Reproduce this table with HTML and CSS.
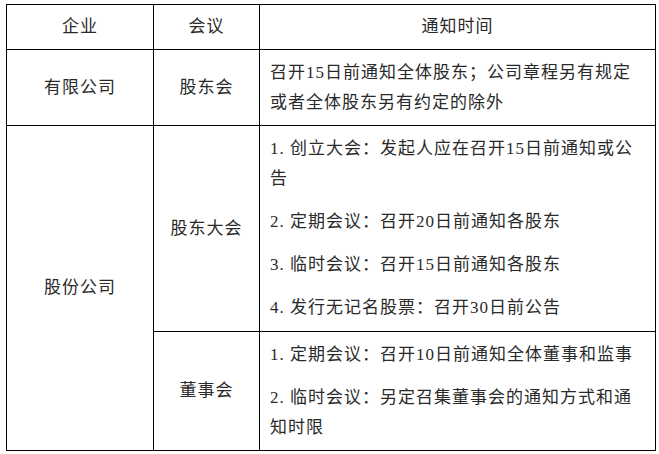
FILE: index.html
```html
<!DOCTYPE html>
<html lang="zh-CN">
<head>
<meta charset="utf-8">
<title>通知时间</title>
<link rel="stylesheet" href="styles.css">
</head>
<body>
<table class="notice-table">
  <colgroup>
    <col class="col-company">
    <col class="col-meeting">
    <col class="col-time">
  </colgroup>
  <tr class="row-head">
    <th>企业</th>
    <th>会议</th>
    <th>通知时间</th>
  </tr>
  <tr class="row-ltd">
    <td class="center">有限公司</td>
    <td class="center">股东会</td>
    <td class="detail"><p>召开15日前通知全体股东；公司章程另有规定<br>或者全体股东另有约定的除外</p></td>
  </tr>
  <tr class="row-agm">
    <td class="center" rowspan="2">股份公司</td>
    <td class="center">股东大会</td>
    <td class="detail">
      <p>1. 创立大会：发起人应在召开15日前通知或公<br>告</p>
      <p>2. 定期会议：召开20日前通知各股东</p>
      <p>3. 临时会议：召开15日前通知各股东</p>
      <p>4. 发行无记名股票：召开30日前公告</p>
    </td>
  </tr>
  <tr class="row-board">
    <td class="center">董事会</td>
    <td class="detail">
      <p>1. 定期会议：召开10日前通知全体董事和监事</p>
      <p>2. 临时会议：另定召集董事会的通知方式和通<br>知时限</p>
    </td>
  </tr>
</table>
</body>
</html>
```
FILE: styles.css
```css
html, body {
  margin: 0;
  padding: 0;
  background: #ffffff;
}

body {
  padding: 4px 0 0 6px;
  font-family: "Liberation Serif", "Noto Sans CJK SC", serif;
  font-size: 17px;
  color: #2a2a2a;
}

.notice-table {
  border-collapse: collapse;
  table-layout: fixed;
  width: 649px;
}

.col-company { width: 147px; }
.col-meeting { width: 106px; }
.col-time { width: 396px; }

.notice-table th,
.notice-table td {
  border: 1px solid #000;
  padding: 0 10px;
  line-height: 30px;
  letter-spacing: 1px;
  vertical-align: middle;
}

.notice-table th {
  font-weight: normal;
  text-align: center;
}

.center {
  text-align: center;
}

.detail {
  text-align: left;
  white-space: nowrap;
}

.detail p {
  margin: 0;
}

.detail p + p {
  margin-top: 13px;
}

.row-head { height: 45px; }
.row-ltd { height: 76px; }
.row-agm { height: 206px; }
.row-board { height: 119px; }
```
